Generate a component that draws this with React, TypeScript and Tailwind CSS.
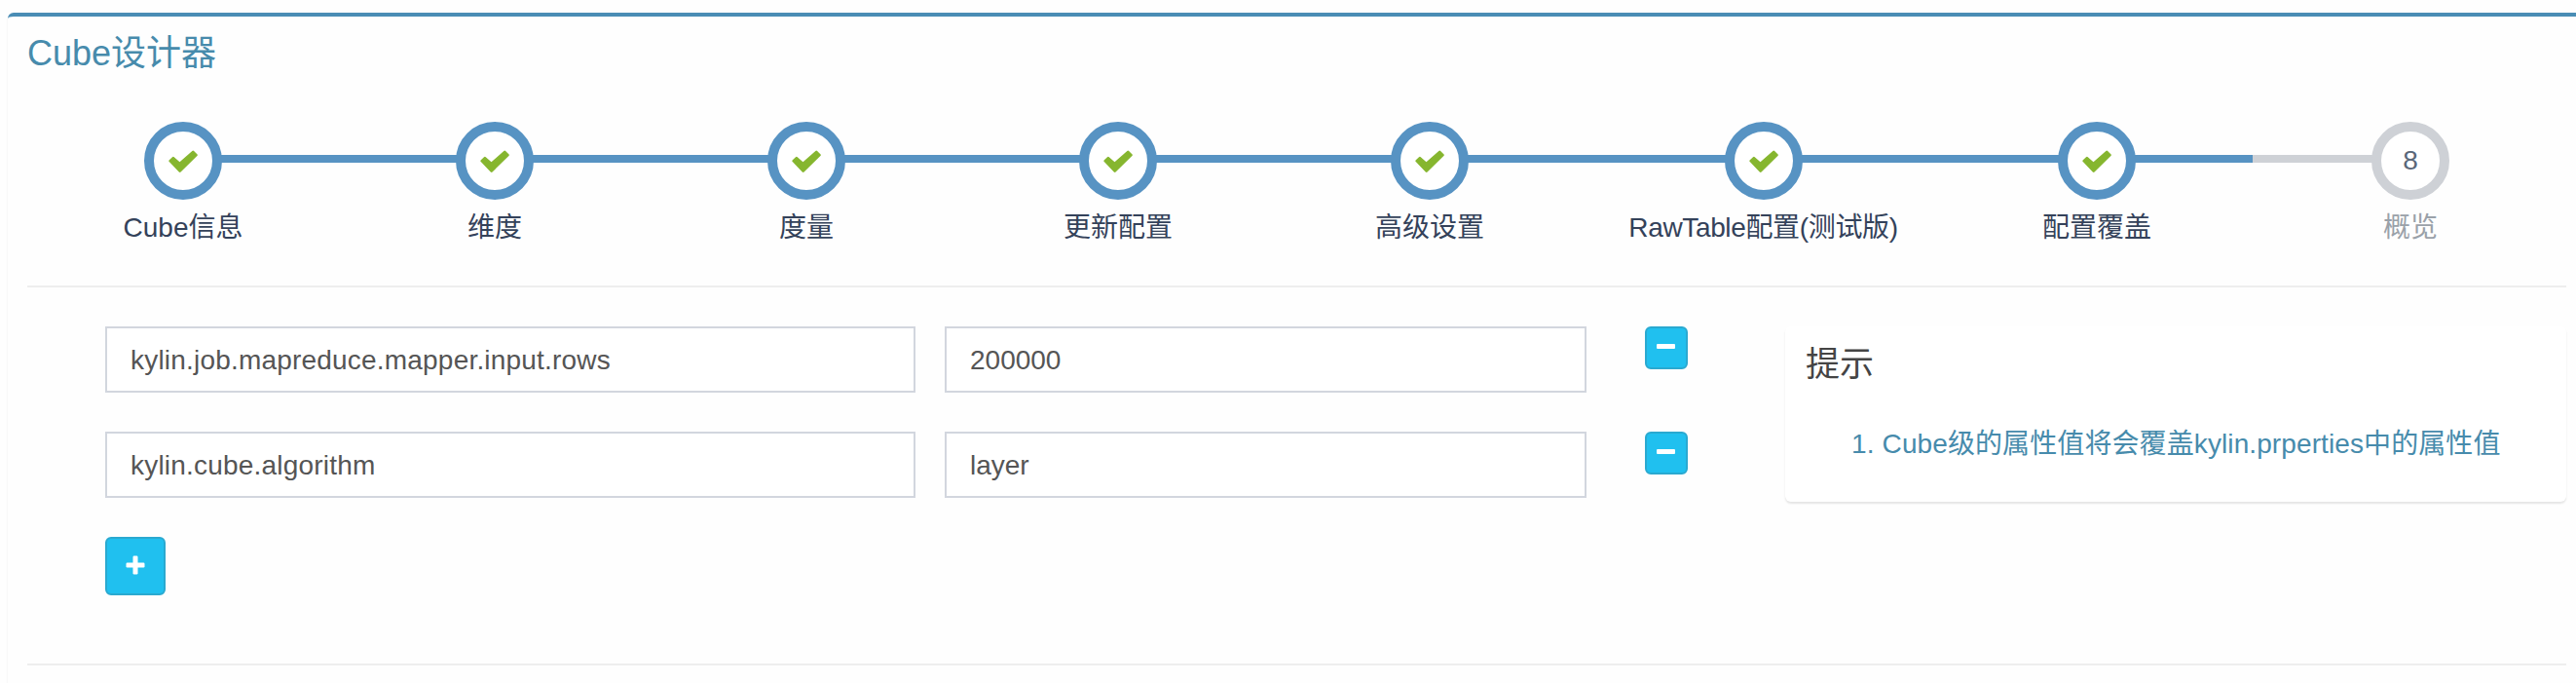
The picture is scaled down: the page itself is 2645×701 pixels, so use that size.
import React from 'react';

type Step = { label: string; width: string; done: boolean; tracking?: string };

const steps: Step[] = [
  { label: 'Cube信息', width: 'w-[320px]', done: true },
  { label: '维度', width: 'w-[320px]', done: true },
  { label: '度量', width: 'w-[320px]', done: true },
  { label: '更新配置', width: 'w-[320px]', done: true },
  { label: '高级设置', width: 'w-[320px]', done: true },
  { label: 'RawTable配置(测试版)', width: 'w-[365px]', done: true, tracking: 'tracking-[-0.35px]' },
  { label: '配置覆盖', width: 'w-[320px]', done: true },
  { label: '概览', width: 'w-[324px]', done: false },
];

const properties = [
  { name: 'kylin.job.mapreduce.mapper.input.rows', value: '200000' },
  { name: 'kylin.cube.algorithm', value: 'layer' },
];

function Check() {
  return (
    <svg
      viewBox="0 0 30 23"
      className="h-[23px] w-[30px]"
      fill="#86b62f"
      stroke="#86b62f"
      strokeWidth="2.6"
      strokeLinejoin="round"
    >
      <path d="M1.700 11.200L4.900 8.100L11.500 14L25.200 1.900L28.500 5.100L11.700 21.500Z" />
    </svg>
  );
}

function StepItem({ step, index }: { step: Step; index: number }) {
  const tone = step.done ? 'bg-[#5793c3]' : 'bg-[#ced1d6]';
  const first = index === 0;
  const last = index === steps.length - 1;
  return (
    <li className={`${step.width} flex shrink-0 flex-col items-center`}>
      <div className="flex w-full items-center">
        <span className={`-mr-1 mb-1 h-2 flex-1 ${first ? '' : tone}`} />
        <span
          className={`relative flex size-20 items-center justify-center rounded-full border-[10px] bg-white text-[28px] leading-8 ${
            step.done ? 'border-[#5793c3]' : 'border-[#ced1d6] text-[#5a6779]'
          }`}
        >
          {step.done ? <Check /> : index + 1}
        </span>
        <span className={`-ml-1 mb-1 h-2 flex-1 ${last ? '' : tone}`} />
      </div>
      <span
        className={`mt-[9px] whitespace-nowrap text-[28px] leading-10 ${step.tracking ?? ''} ${
          step.done ? 'text-[#34425a]' : 'text-[#9aa1a9]'
        }`}
      >
        {step.label}
      </span>
    </li>
  );
}

export default function App() {
  return (
    <div className="h-[701px] overflow-hidden bg-[#fefefe] pl-2 pt-[13px] font-['Liberation_Sans','Noto_Sans_CJK_SC',sans-serif]">
      <main className="h-[700px] rounded-tl-md border-t-4 border-[#4a8db5] bg-[#fefefe] pl-5 pr-[10px] shadow-[0_2px_2px_rgba(0,0,0,0.1)]">
        <h1 className="pt-[18px] text-[36px] leading-10 text-[#478bac]">Cube设计器</h1>

        <ol className="mt-[50px] flex">
          {steps.map((s, i) => (
            <StepItem key={s.label} step={s} index={i} />
          ))}
        </ol>

        <hr className="mt-[39px] border-t-2 border-[#eeeeee]" />

        <div className="mt-10 flex items-start pl-20">
          <div className="w-[1725px]">
            {properties.map((p) => (
              <div key={p.name} className="mb-10 flex items-start text-[28px] leading-8 text-[#555555]">
                <div className="mr-[30px] flex h-[68px] w-[832px] items-center border-2 border-[#d2d6de] bg-white px-6 pt-px tracking-[0.2px]">
                  {p.name}
                </div>
                <div className="mr-[60px] flex h-[68px] w-[659px] items-center border-2 border-[#d2d6de] bg-white px-6 pt-px">
                  {p.value}
                </div>
                <button
                  aria-label="-"
                  className="flex size-11 items-center justify-center rounded-md border-2 border-[#2aa9d0] bg-[#20c0ef]"
                >
                  <span className="mb-[3px] mr-px h-[5px] w-[19px] rounded-[1px] bg-white" />
                </button>
              </div>
            ))}
            <button
              aria-label="+"
              className="flex h-[60px] w-[62px] items-center justify-center rounded-md border-2 border-[#2aa9d0] bg-[#20c0ef]"
            >
              <svg viewBox="0 0 20 20" className="mb-[3px] size-5" fill="#fff">
                <rect x="0.500" y="7.500" width="19" height="5" rx="1.200" />
                <rect x="7.500" y="0.500" width="5" height="19" rx="1.200" />
              </svg>
            </button>
          </div>

          <aside className="h-[180px] flex-1 rounded-md bg-white pl-[21px] pt-[19px] shadow-[0_2px_2px_rgba(0,0,0,0.1)]">
            <h2 className="text-[35px] leading-10 text-[#444444]">提示</h2>
            <ol className="mt-[42px] flex text-[28px] leading-10 text-[#478bac]">
              <li className="flex whitespace-nowrap pl-[47px] tracking-[0.1px]">
                <span className="mr-2">1.</span>
                <span>Cube级的属性值将会覆盖kylin.prperties中的属性值</span>
              </li>
            </ol>
          </aside>
        </div>

        <hr className="mt-[70px] border-t-2 border-[#eeeeee]" />
      </main>
    </div>
  );
}
